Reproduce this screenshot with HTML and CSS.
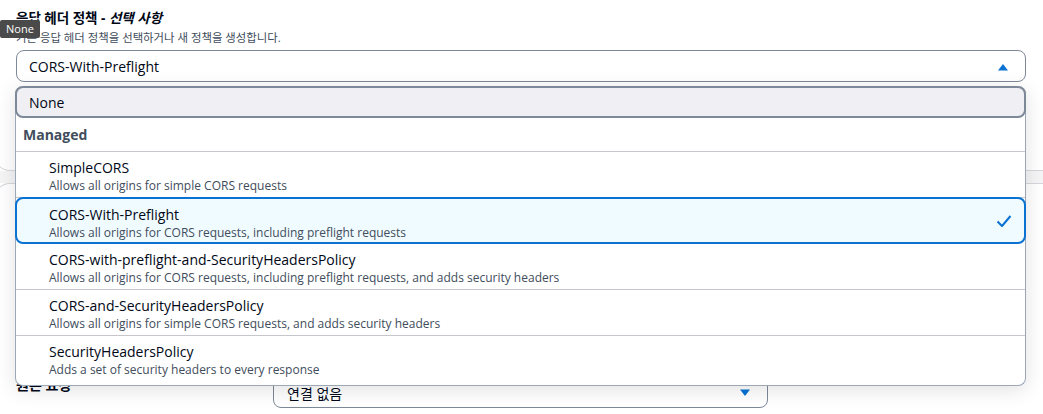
FILE: index.html
```html
<!DOCTYPE html>
<html lang="ko">
<head>
<meta charset="utf-8">
<link rel="stylesheet" href="styles.css">
</head>
<body>
<div class="page">
  <section class="card card-top">
    <div class="field">
      <div class="label">응답 헤더 정책 - <i>선택 사항</i></div>
      <div class="desc">기존 응답 헤더 정책을 선택하거나 새 정책을 생성합니다.</div>
      <div class="select">
        <span>CORS-With-Preflight</span>
        <svg class="caret" width="12" height="8" viewBox="0 0 12 8"><path d="M1 7.5 L6 1 L11 7.5 Z" fill="#0972d3"/></svg>
      </div>
    </div>
  </section>
  <div class="band"></div>
  <section class="card card-bottom">
    <div class="row">
      <div class="row-label">원본 요청</div>
      <div class="select small">
        <span>연결 없음</span>
        <svg class="caret" width="12" height="8" viewBox="0 0 12 8"><path d="M1 0.5 L6 7 L11 0.5 Z" fill="#0972d3"/></svg>
      </div>
    </div>
  </section>

  <div class="dropdown">
    <div class="opt-none">None</div>
    <div class="group">Managed</div>
    <ul class="options">
      <li class="opt">
        <div class="t">SimpleCORS</div>
        <div class="d">Allows all origins for simple CORS requests</div>
      </li>
      <li class="opt selected">
        <div class="t">CORS-With-Preflight</div>
        <div class="d">Allows all origins for CORS requests, including preflight requests</div>
        <svg class="check" width="16" height="16" viewBox="0 0 16 16"><path d="M1.5 8.5 L6 13 L14.5 3" fill="none" stroke="#0972d3" stroke-width="2" stroke-linejoin="round"/></svg>
      </li>
      <li class="opt">
        <div class="t">CORS-with-preflight-and-SecurityHeadersPolicy</div>
        <div class="d">Allows all origins for CORS requests, including preflight requests, and adds security headers</div>
      </li>
      <li class="opt">
        <div class="t">CORS-and-SecurityHeadersPolicy</div>
        <div class="d">Allows all origins for simple CORS requests, and adds security headers</div>
      </li>
      <li class="opt last">
        <div class="t">SecurityHeadersPolicy</div>
        <div class="d">Adds a set of security headers to every response</div>
      </li>
    </ul>
  </div>

  <div class="tooltip">None</div>
</div>
</body>
</html>
```

FILE: styles.css
```css
* { box-sizing: border-box; }
html, body { margin: 0; padding: 0; background: #ffffff; }
body {
  font-family: "Open Sans", "Noto Sans CJK KR", sans-serif;
  color: #000716;
  width: 1043px;
  height: 414px;
  overflow: hidden;
}
.page { position: relative; width: 1043px; height: 414px; overflow: hidden; }

.card {
  background: #fff;
  margin-left: -6px;
  margin-right: -30px;
  border: 1px solid #d5d7dc;
  border-radius: 16px;
}
.card-top {
  border-top: none;
  border-top-left-radius: 0;
  border-top-right-radius: 0;
  height: 171px;
  padding: 9px 0 0 21px;
}
.band { height: 12px; background: #f5f5f6; }
.card-bottom {
  height: 231px;
  padding: 194px 0 0 21px;
  border-bottom: none;
  border-bottom-left-radius: 0;
  border-bottom-right-radius: 0;
}

.label { font-size: 13.5px; font-weight: 700; line-height: 19px; }
.label i { font-weight: 700; }
.desc { font-size: 11.4px; color: #414d5c; line-height: 16px; margin-top: 2px; }
.select {
  margin-top: 4px;
  width: 1010px;
  height: 32px;
  border: 1px solid #7d8998;
  border-radius: 8px;
  display: flex;
  align-items: center;
  justify-content: space-between;
  padding: 1px 16px 0 12px;
  font-size: 14px;
}
.row { display: flex; align-items: flex-start; }
.row-label { width: 257px; font-size: 14px; font-weight: 700; line-height: 18px; margin-top: -2px; }
.select.small { width: 495px; height: 30px; margin-top: 0; padding: 0 16px 0 13px; }

.dropdown {
  position: absolute;
  left: 15px;
  top: 86px;
  width: 1011px;
  height: 300px;
  background: #fff;
  border: 1px solid #9ba7b6;
  border-top: none;
  border-radius: 8px;
  box-shadow: 0 4px 20px rgba(0, 7, 22, 0.12);
}
.opt-none {
  height: 32px;
  margin: 0 -1px;
  background: #f0f0f4;
  border: 2px solid #7d8998;
  border-radius: 8px;
  font-size: 14px;
  padding: 5px 0 0 12px;
}
.group {
  height: 34px;
  font-size: 14px;
  font-weight: 700;
  padding: 7px 0 0 7px;
  color: #414d5c;
  border-bottom: 1px solid #c6c6cd;
}
.options { list-style: none; margin: 0; padding: 0; }
.opt {
  position: relative;
  height: 46px;
  padding: 7px 0 0 33px;
  border-bottom: 1px solid #c6c6cd;
}
.opt.last { border-bottom: none; }
.opt .t { font-size: 14px; line-height: 18px; color: #000716; }
.opt .d { font-size: 12px; line-height: 16px; color: #414d5c; margin-top: 1px; }
.opt.selected {
  margin: -1px -1px 0;
  height: 47px;
  padding: 7px 0 0 32px;
  background: #f0fbff;
  border: 2px solid #0972d3;
  border-radius: 8px;
}
.check { position: absolute; right: 12px; top: 14px; }

.tooltip {
  position: absolute;
  left: 0;
  top: 20px;
  height: 18px;
  padding: 0 6px;
  background: #4a4a4a;
  color: #fff;
  font-size: 11px;
  line-height: 18px;
  border-radius: 2px;
}
```
